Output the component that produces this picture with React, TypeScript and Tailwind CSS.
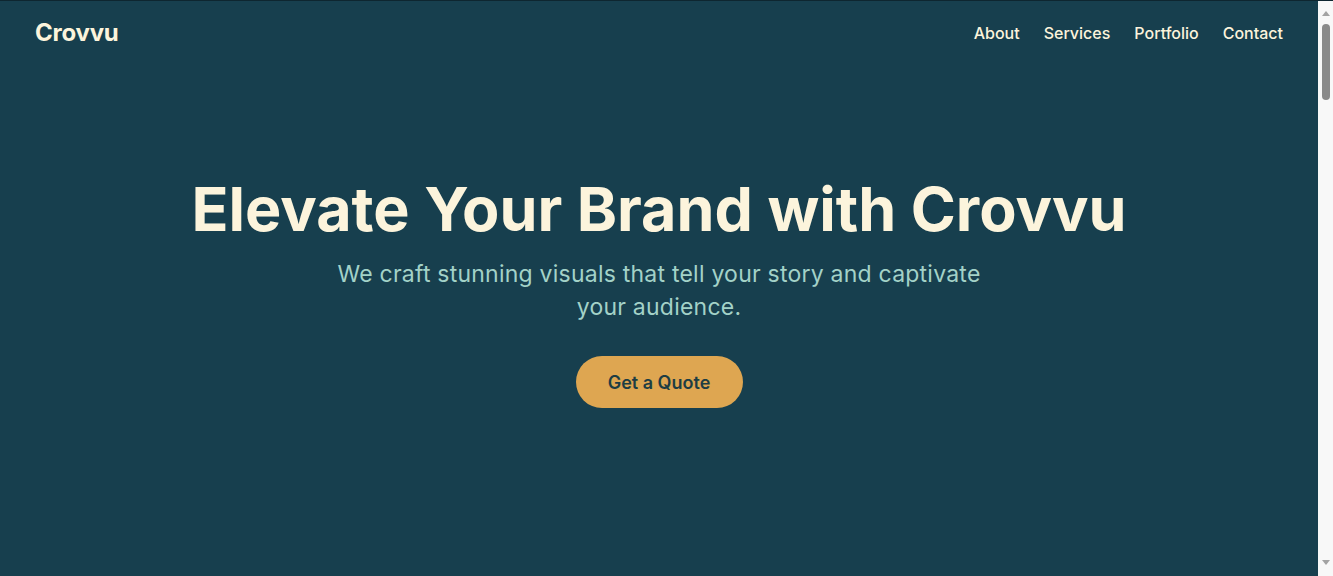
const links = ['About', 'Services', 'Portfolio', 'Contact']

export default function App() {
  return (
    <div className="flex h-screen overflow-hidden border-t border-[#0e2630] font-['Inter',_'Liberation_Sans',_sans-serif]">
      <main className="flex-1 bg-[#173f4e] text-[#fcf4dc]">
        {/* Header */}
        <header className="flex items-center justify-between px-[35px] pt-[14px] pb-[10px]">
          <a href="#" className="text-[24px] font-bold tracking-[-0.01em]">
            Crovvu
          </a>
          <nav className="flex items-center gap-6 text-[16px] font-medium">
            {links.map((l) => (
              <a key={l} href={`#${l.toLowerCase()}`} className="hover:text-[#dea651]">
                {l}
              </a>
            ))}
          </nav>
        </header>

        {/* Hero */}
        <section className="flex flex-col items-center px-4 pt-[115px] text-center">
          <h1 className="text-[61px] font-bold leading-[1.1]">
            Elevate Your Brand with Crovvu
          </h1>
          <p className="mt-[15px] max-w-[665px] text-[23px] leading-[33px] tracking-[0.01em] text-[#a3d2c8]">
            We craft stunning visuals that tell your story and captivate your audience.
          </p>
          <a
            href="#contact"
            className="mt-[32px] flex h-[52px] w-[167px] items-center justify-center rounded-full bg-[#dea651] text-[18px] font-semibold text-[#1d3d43]"
          >
            Get a Quote
          </a>
        </section>
      </main>

      {/* Scrollbar */}
      <aside className="flex w-[15px] flex-col items-center bg-[#f8f8f8] pt-[10px] pb-[11px]">
        <svg width="8" height="5" viewBox="0 0 8 5">
          <path d="M4 0 L8 5 L0 5 Z" fill="#a3a3a3" />
        </svg>
        <div className="mt-[8px] h-[76px] w-[8px] rounded-full bg-[#8a8a8a]" />
        <div className="flex-1" />
        <svg width="8" height="5" viewBox="0 0 8 5">
          <path d="M0 0 L8 0 L4 5 Z" fill="#a3a3a3" />
        </svg>
      </aside>
    </div>
  )
}
